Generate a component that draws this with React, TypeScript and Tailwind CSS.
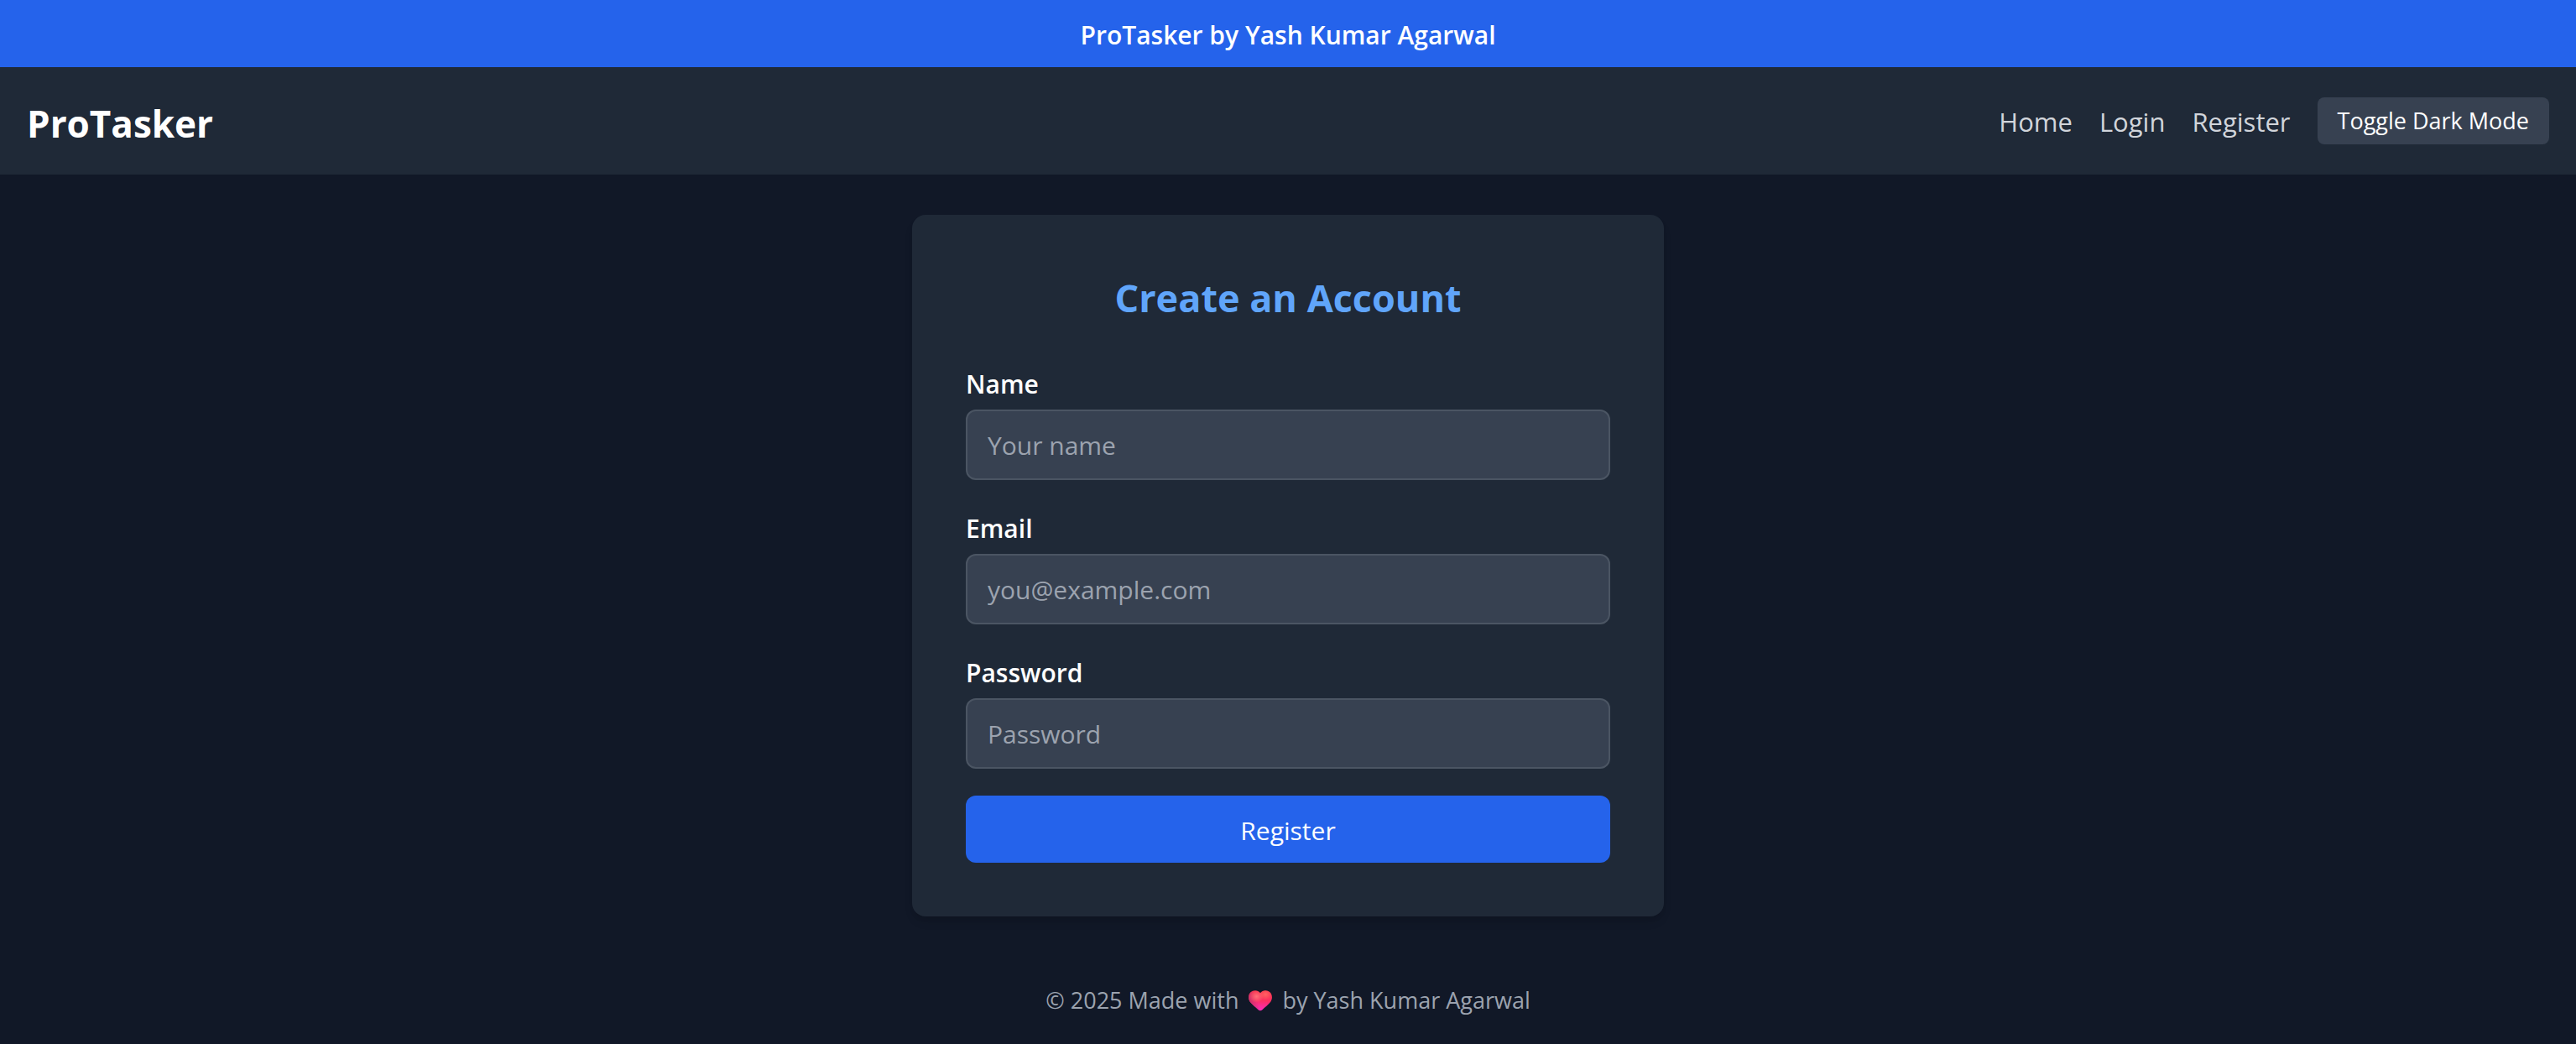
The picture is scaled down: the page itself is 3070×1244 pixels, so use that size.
const fields = [
  { id: 'name', label: 'Name', type: 'text', placeholder: 'Your name' },
  { id: 'email', label: 'Email', type: 'email', placeholder: 'you@example.com' },
  { id: 'password', label: 'Password', type: 'password', placeholder: 'Password' },
];

const links = ['Home', 'Login', 'Register'];

function Heart() {
  return (
    <svg viewBox="0 0 28 25" className="mx-3 inline-block h-[25px] w-7 align-[-3px]" role="img" aria-label="love">
      <defs>
        <linearGradient id="heart-base" x1="0.6" y1="0" x2="0.5" y2="1">
          <stop offset="0" stopColor="#f8384c" />
          <stop offset="0.5" stopColor="#fc2f62" />
          <stop offset="1" stopColor="#fb2cc0" />
        </linearGradient>
        <radialGradient id="heart-light" cx="0.72" cy="0.2" r="0.28">
          <stop offset="0" stopColor="#ff6262" />
          <stop offset="1" stopColor="#ff6262" stopOpacity="0" />
        </radialGradient>
        <radialGradient id="heart-glow" cx="0.34" cy="0.3" r="0.3">
          <stop offset="0" stopColor="#ff6f78" />
          <stop offset="1" stopColor="#ff6f78" stopOpacity="0" />
        </radialGradient>
        <linearGradient id="heart-edge" x1="0" y1="0.5" x2="0.35" y2="0.4">
          <stop offset="0" stopColor="#c8326b" />
          <stop offset="1" stopColor="#c8326b" stopOpacity="0" />
        </linearGradient>
      </defs>
      {['heart-base', 'heart-edge', 'heart-light', 'heart-glow'].map((fill) => (
        <path
          key={fill}
          fill={`url(#${fill})`}
          d="M14 3.2C11.2-.6 5.8-.8 2.6 2.2-.9 5.6-.6 11 2.4 14.6 5 17.8 8.6 20.6 11.6 23.2 13.2 24.7 14.8 24.7 16.4 23.2 19.4 20.6 23 17.8 25.6 14.6 28.6 11 28.9 5.6 25.4 2.2 22.2-.8 16.8-.6 14 3.2Z"
        />
      ))}
    </svg>
  );
}

export default function App() {
  return (
    <div className="flex min-h-screen flex-col bg-[#111827] font-['Open_Sans','Noto_Sans',sans-serif] text-[30px] leading-11 text-white">
      <div className="bg-[#2563eb] pt-5 pb-4 text-center font-semibold">ProTasker by Yash Kumar Agarwal</div>
      <header className="flex items-center justify-between bg-[#1f2937] p-8">
        <h1 className="pt-1.5 text-[44px] leading-[58px] font-bold">ProTasker</h1>
        <nav className="flex items-center gap-8 text-[31px] text-[#d1d5db]">
          {links.map((link) => (
            <a key={link} href={`#${link.toLowerCase()}`} className="pt-0.5">
              {link}
            </a>
          ))}
          <button type="button" className="rounded-lg bg-[#374151] px-6 py-2 text-[27px] leading-10 text-white">
            Toggle Dark Mode
          </button>
        </nav>
      </header>
      <main className="grow px-8 py-12">
        <form className="mx-auto max-w-4xl rounded-2xl bg-[#1f2937] p-16 shadow-[0_8px_12px_-2px_rgba(0,0,0,0.1),0_4px_8px_-4px_rgba(0,0,0,0.1)]">
          <h2 className="mb-12 pt-1.5 text-center text-[45px] leading-[58px] font-bold text-[#60a5fa]">
            Create an Account
          </h2>
          <div className="flex flex-col gap-8">
            {fields.map((f) => (
              <div key={f.id} className="flex flex-col gap-2">
                <label htmlFor={f.id} className="pt-1 font-semibold">
                  {f.label}
                </label>
                <input
                  id={f.id}
                  type={f.type}
                  placeholder={f.placeholder}
                  className="h-[84px] w-full rounded-xl border-2 border-[#4b5563] bg-[#374151] px-6 placeholder:text-[#9ca3af]"
                />
              </div>
            ))}
            <button type="submit" className="w-full rounded-xl bg-[#2563eb] pt-5 pb-4">
              Register
            </button>
          </div>
        </form>
      </main>
      <footer className="py-8 text-center text-[27px] leading-10 text-[#9ca3af]">
        © 2025 Made with
        <Heart />
        by Yash Kumar Agarwal
      </footer>
    </div>
  );
}
